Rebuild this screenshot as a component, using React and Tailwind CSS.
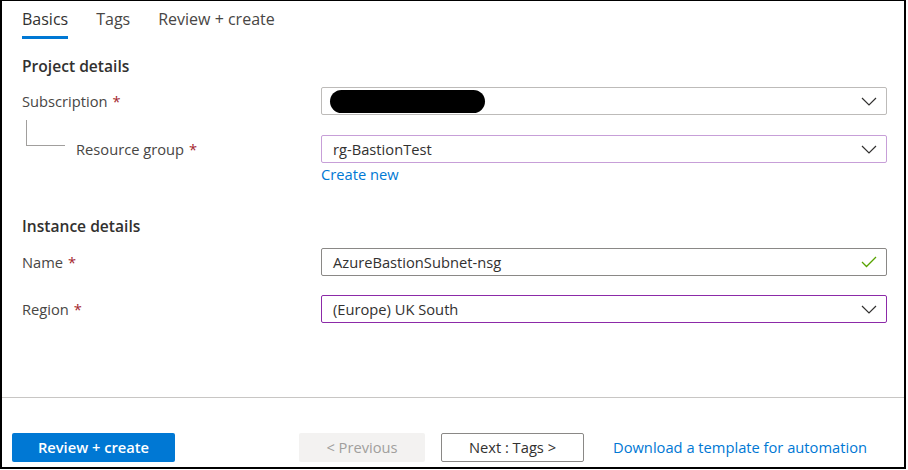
import React from "react";

const Chevron = () => (
  <svg width="16" height="9" viewBox="0 0 16 9" className="shrink-0">
    <polyline points="1,1 8,8 15,1" fill="none" stroke="#323130" strokeWidth="1.2" />
  </svg>
);

const Check = () => (
  <svg width="16" height="12" viewBox="0 0 16 12" className="shrink-0">
    <polyline points="1,6 5.5,10.5 15,1" fill="none" stroke="#57a300" strokeWidth="1.3" />
  </svg>
);

const Req = () => <span className="text-[#a4262c] ml-[5px]">*</span>;

function Field({ border, children, icon }) {
  return (
    <div className={`h-[28px] w-[566px] border rounded-[2px] ${border} flex items-center pl-[11px] pr-[9px] bg-white`}>
      <div className="flex-1 flex items-center text-[14.7px] text-[#323130]">{children}</div>
      {icon}
    </div>
  );
}

export default function App() {
  return (
    <div className="w-[908px] h-[470px] bg-white" style={{ fontFamily: '"Open Sans", "Noto Sans", sans-serif' }}>
      <div className="w-[906px] h-[469px] border-x-2 border-b-2 border-t border-black flex flex-col">
        {/* Tabs */}
        <div className="h-[38px] flex pl-5 gap-[28px] text-[16px]">
          <div className="h-full flex items-center border-b-[3px] border-[#0078d4] text-[#323130]">Basics</div>
          <div className="h-full flex items-center border-b-[3px] border-transparent text-[#484644]">Tags</div>
          <div className="h-full flex items-center border-b-[3px] border-transparent text-[#484644]">Review + create</div>
        </div>

        <div className="pl-5 flex flex-col">
          <div className="mt-[17px] h-[20px] leading-[20px] text-[15.6px] font-semibold text-[#323130]">Project details</div>

          <div className="mt-[11px] grid grid-cols-[299px_566px] items-center">
            <div className="text-[14.7px] text-[#484644]">Subscription<Req /></div>
            <Field border="border-[#bdbbb9]" icon={<Chevron />}>
              <div className="w-[155px] h-[23px] rounded-full bg-black -ml-[3px]" />
            </Field>
          </div>

          <div className="mt-[20px] grid grid-cols-[299px_566px]">
            <div className="flex items-start">
              <div className="ml-[4px] -mt-[15px] h-[26px] w-[39px] border-l border-b border-[#a19f9d]" />
              <div className="ml-[11px] h-[28px] flex items-center text-[14.7px] text-[#484644]">Resource group<Req /></div>
            </div>
            <div className="flex flex-col">
              <Field border="border-[#c79fd8]" icon={<Chevron />}>rg-BastionTest</Field>
              <div className="mt-[1px] h-[20px] leading-[20px] text-[14.7px] text-[#0078d4]">Create new</div>
            </div>
          </div>

          <div className="mt-[32px] h-[20px] leading-[20px] text-[15.6px] font-semibold text-[#323130]">Instance details</div>

          <div className="mt-[12px] grid grid-cols-[299px_566px] items-center">
            <div className="text-[14.7px] text-[#484644]">Name<Req /></div>
            <Field border="border-[#8a8886]" icon={<Check />}>AzureBastionSubnet-nsg</Field>
          </div>

          <div className="mt-[19px] grid grid-cols-[299px_566px] items-center">
            <div className="text-[14.7px] text-[#484644]">Region<Req /></div>
            <Field border="border-[#8c2aa8]" icon={<Chevron />}>(Europe) UK South</Field>
          </div>
        </div>

        <div className="flex-1" />
        <div className="h-px bg-[#c8c6c4]" />
        <div className="mt-[35px] mb-[5px] flex items-center pl-[10px]">
          <div className="w-[163px] h-[29px] rounded-[2px] bg-[#0078d4] text-white font-semibold text-[14.7px] flex items-center justify-center">Review + create</div>
          <div className="ml-[124px] w-[126px] h-[29px] rounded-[2px] bg-[#f3f2f1] text-[#a19f9d] text-[14.7px] flex items-center justify-center">&lt; Previous</div>
          <div className="ml-[16px] w-[143px] h-[29px] rounded-[2px] border border-[#8a8886] bg-white text-[#323130] text-[14.7px] flex items-center justify-center">Next : Tags &gt;</div>
          <div className="ml-[29px] text-[14.7px] text-[#0078d4]">Download a template for automation</div>
        </div>
      </div>
    </div>
  );
}
